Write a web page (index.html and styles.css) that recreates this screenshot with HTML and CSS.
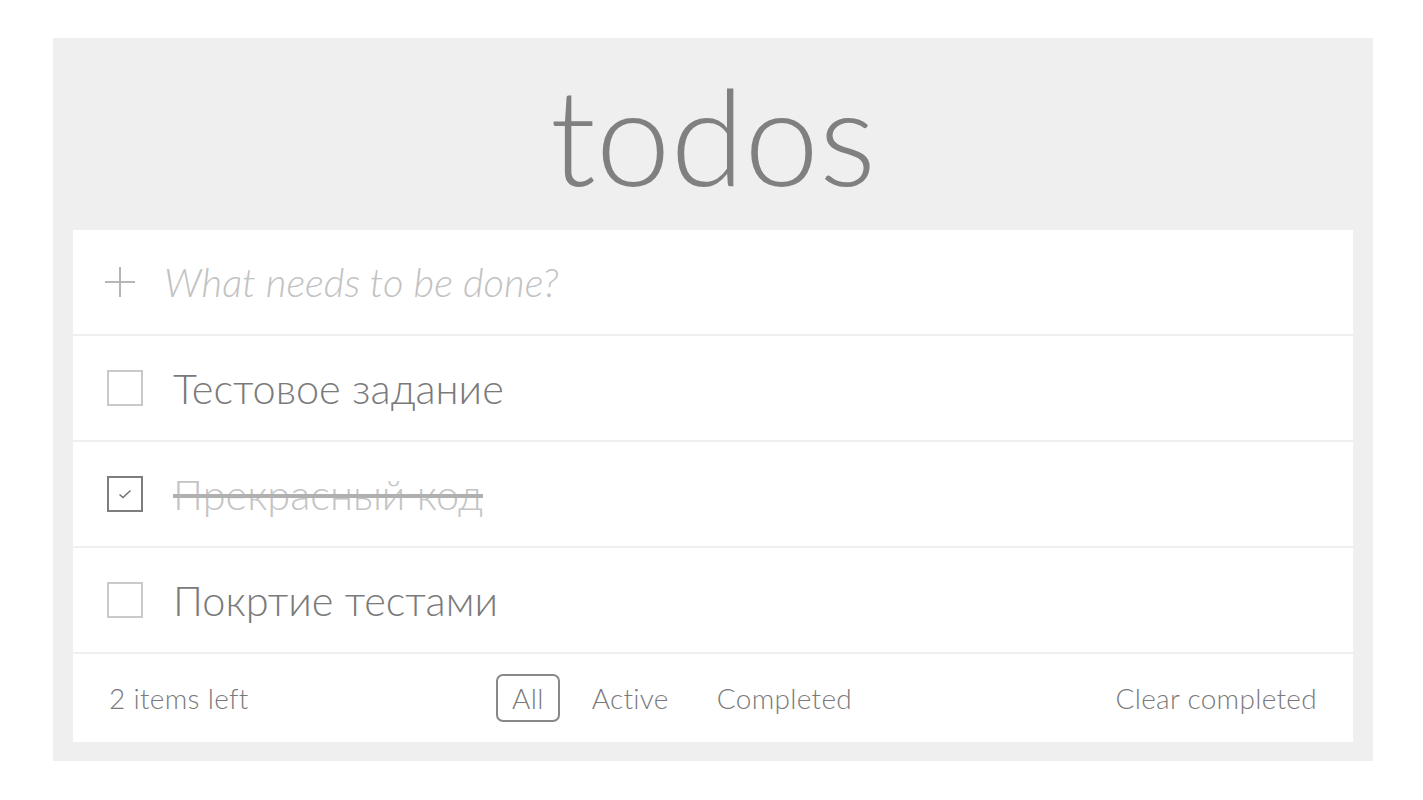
FILE: index.html
```html
<!DOCTYPE html>
<html lang="ru">
<head>
<meta charset="utf-8">
<title>todos</title>
<link rel="stylesheet" href="styles.css">
</head>
<body>
<section class="app">
  <h1 class="title">todos</h1>
  <div class="card">
    <div class="row new-row">
      <span class="plus" aria-hidden="true"></span>
      <input class="new-input" type="text" placeholder="What needs to be done?">
    </div>
    <ul class="list">
      <li class="row item">
        <span class="check"></span>
        <span class="label">Тестовое задание</span>
      </li>
      <li class="row item done">
        <span class="check checked">
          <svg class="tick" viewBox="0 0 16 16"><path d="M2.5 8.5 L6 11.5 L13.5 4.5" fill="none" stroke="#6f6f6f" stroke-width="1.4"/></svg>
        </span>
        <span class="label">Прекрасный код</span>
      </li>
      <li class="row item">
        <span class="check"></span>
        <span class="label">Покртие тестами</span>
      </li>
    </ul>
    <footer class="footer">
      <span class="count">2 items left</span>
      <nav class="filters">
        <a class="filter selected">All</a>
        <a class="filter">Active</a>
        <a class="filter">Completed</a>
      </nav>
      <a class="clear">Clear completed</a>
    </footer>
  </div>
</section>
</body>
</html>
```

FILE: styles.css
```css
* { box-sizing: border-box; }
html, body { margin: 0; padding: 0; background: #fff; }
body {
  font-family: "Lato", "Noto Sans", sans-serif;
  font-weight: 300;
  color: #7a7a7a;
}
.app {
  width: 1320px;
  margin: 38px 0 0 53px;
  background: #efefef;
  padding: 0 20px 19px;
}
.title {
  margin: 0;
  height: 192px;
  text-align: center;
  font-weight: 300;
  font-size: 134px;
  line-height: 194px;
  color: #808080;
}
.card { background: #fff; }
.row {
  height: 106px;
  border-bottom: 2px solid #efefef;
  display: flex;
  align-items: center;
}
.new-row { padding-left: 32px; }
.plus {
  position: relative;
  width: 30px;
  height: 30px;
  flex: none;
}
.plus::before, .plus::after {
  content: "";
  position: absolute;
  background: #b5b5b5;
}
.plus::before { left: 0; right: 0; top: 14px; height: 2px; }
.plus::after { top: 0; bottom: 0; left: 14px; width: 2px; }
.new-input {
  margin-left: 27px;
  border: 0;
  outline: none;
  flex: 1;
  font-family: inherit;
  font-weight: 300;
  font-size: 40px;
  font-style: italic;
  color: #777;
  background: transparent;
}
.new-input::placeholder { color: #c2c2c2; font-style: italic; }
.list { list-style: none; margin: 0; padding: 0; }
.item { padding-left: 34px; }
.check {
  width: 36px;
  height: 36px;
  border: 2px solid #c9c9c9;
  flex: none;
  display: flex;
  align-items: center;
  justify-content: center;
}
.check.checked { border-color: #7d7d7d; }
.tick { width: 16px; height: 16px; display: block; }
.label {
  margin-left: 30px;
  font-size: 41.5px;
  color: #7a7a7a;
}
.done .label {
  color: #c4c4c4;
  text-decoration: line-through;
  text-decoration-color: #b0b0b0;
}
.footer {
  height: 88px;
  padding: 0 36px;
  display: flex;
  align-items: center;
  justify-content: space-between;
  font-size: 28px;
  letter-spacing: 0.3px;
  color: #7a7a7a;
}
.filters { display: flex; gap: 16px; }
.filter {
  padding: 5px 14px;
  border: 2px solid transparent;
  border-radius: 7px;
  color: #7a7a7a;
}
.filter.selected { border-color: #888; }
.clear { color: #7a7a7a; }
```
